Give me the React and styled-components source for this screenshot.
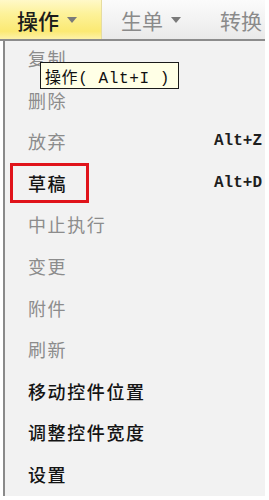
import React from 'react';
import styled, { createGlobalStyle } from 'styled-components';

const GlobalStyle = createGlobalStyle`
  html, body {
    margin: 0;
    padding: 0;
    background: #ffffff;
  }
  body {
    font-family: "Noto Sans CJK SC", "Noto Sans", sans-serif;
  }
`;

const items = [
  { label: '复制', disabled: true },
  { label: '删除', disabled: true },
  { label: '放弃', disabled: true, shortcut: 'Alt+Z' },
  { label: '草稿', shortcut: 'Alt+D', boxed: true },
  { label: '中止执行', disabled: true },
  { label: '变更', disabled: true },
  { label: '附件', disabled: true },
  { label: '刷新', disabled: true },
  { label: '移动控件位置' },
  { label: '调整控件宽度' },
  { label: '设置' },
];

function Arrow() {
  return (
    <svg width="10" height="6" viewBox="0 0 10 6">
      <polygon points="0,0 10,0 5,6" fill="#7a7a7a" />
    </svg>
  );
}

//Component
export default function App() {
  return (
    <SDPage>
      <GlobalStyle />
      <SDTopBar>
        <SDTab active>
          操作
          <Arrow />
        </SDTab>
        <SDTab>
          生单
          <Arrow />
        </SDTab>
        <SDTab last>转换</SDTab>
      </SDTopBar>
      <SDMenu>
        {items.map((item) => (
          <SDRow key={item.label}>
            <SDLabel disabled={item.disabled} boxed={item.boxed}>
              {item.label}
            </SDLabel>
            {item.shortcut && <SDShortcut>{item.shortcut}</SDShortcut>}
          </SDRow>
        ))}
        <SDTooltip>操作( Alt+I )</SDTooltip>
      </SDMenu>
    </SDPage>
  );
}

//Styling Of Component

const SDPage = styled.div`
  width: 269px;
  height: 500px;
  overflow: hidden;
  background: #ffffff;
`;

const SDTopBar = styled.div`
  display: flex;
  width: 265px;
  height: 39px;
  background: linear-gradient(#fbfbfb, #f1f1f1 60%, #e9e9e9);
  border-bottom: 2px solid #8c8c8c;
  box-sizing: content-box;
`;

const SDTab = styled.div`
  box-sizing: border-box;
  display: flex;
  align-items: center;
  gap: 8px;
  height: 100%;
  width: ${(p) => (p.active ? '102px' : p.last ? 'auto' : '116px')};
  flex: ${(p) => (p.last ? '1' : 'none')};
  padding-left: ${(p) => (p.active ? '17px' : p.last ? '0' : '19px')};
  justify-content: ${(p) => (p.last ? 'flex-end' : 'flex-start')};
  padding-right: ${(p) => (p.last ? '3px' : '0')};
  font-size: 21px;
  font-weight: ${(p) => (p.active ? 500 : 400)};
  color: ${(p) => (p.active ? '#1c1c1c' : '#8a8a8a')};
  background: ${(p) =>
    p.active
      ? 'linear-gradient(#fff9c8, #fdf29a 35%, #fbe973 80%, #fdf2a8)'
      : 'transparent'};
  border-right: ${(p) => (p.active ? '1px solid #e6dca0' : 'none')};
`;

const SDMenu = styled.div`
  position: relative;
  box-sizing: border-box;
  width: 262px;
  height: 455px;
  margin-left: 3px;
  overflow: hidden;
  background: #f2f2f2;
  border-left: 2px solid #8a8a8a;
`;

const SDRow = styled.div`
  box-sizing: border-box;
  display: flex;
  align-items: center;
  justify-content: space-between;
  height: 41.6px;
  padding: 4px 3px 0 23px;
  align-items: flex-start;
`;

const SDLabel = styled.span`
  font-size: 18px;
  line-height: 26px;
  letter-spacing: 1.6px;
  color: ${(p) => (p.disabled ? '#8c8c8c' : '#141414')};
  font-weight: ${(p) => (p.disabled ? 400 : 500)};
  border: ${(p) => (p.boxed ? '3px solid #e0141b' : 'none')};
  padding: ${(p) => (p.boxed ? '4px 19px 4px 15px' : '0')};
  margin: ${(p) => (p.boxed ? '-7px 0 0 -18px' : '0')};
`;

const SDShortcut = styled.span`
  font-family: "Liberation Mono", monospace;
  font-size: 16px;
  font-weight: bold;
  line-height: 26px;
  color: #1e1e1e;
`;

const SDTooltip = styled.div`
  position: absolute;
  left: 35px;
  top: 21px;
  box-sizing: border-box;
  width: 139px;
  height: 27px;
  padding: 0 4px;
  display: flex;
  align-items: center;
  background: #ffffe6;
  border: 1px solid #1a1a1a;
  font-family: "Liberation Mono", "Noto Sans CJK SC", monospace;
  font-size: 16px;
  letter-spacing: 0.6px;
  color: #111111;
  white-space: pre;
`;
